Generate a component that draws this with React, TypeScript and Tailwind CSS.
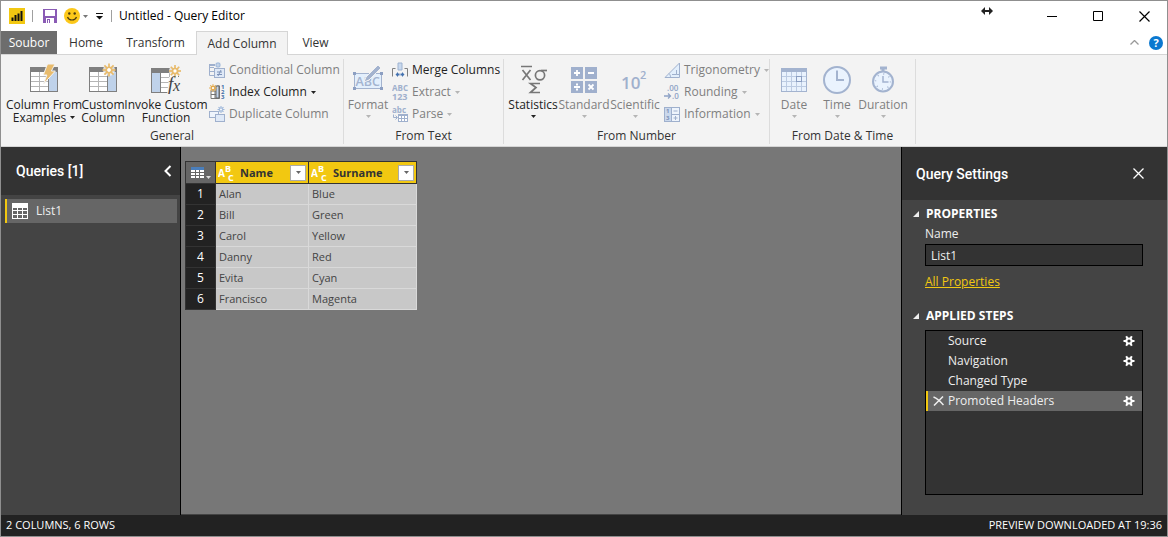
import { ReactNode } from 'react'
import clsx from 'clsx'

const rows = [
    { name: 'Alan', surname: 'Blue' },
    { name: 'Bill', surname: 'Green' },
    { name: 'Carol', surname: 'Yellow' },
    { name: 'Danny', surname: 'Red' },
    { name: 'Evita', surname: 'Cyan' },
    { name: 'Francisco', surname: 'Magenta' },
]

const steps = [
    { title: 'Source', settings: true, selected: false },
    { title: 'Navigation', settings: true, selected: false },
    { title: 'Changed Type', settings: false, selected: false },
    { title: 'Promoted Headers', settings: true, selected: true },
]

const tabs = [
    { title: 'Home', width: 'w-[58px]', active: false },
    { title: 'Transform', width: 'w-[81px]', active: false },
    { title: 'Add Column', width: 'w-[92px]', active: true },
    { title: 'View', width: 'w-[55px]', active: false },
]

/* ---------- icons ---------- */

function Caret({ className }: { className?: string }) {
    return (
        <svg width="5" height="3" viewBox="0 0 5 3" className={clsx('shrink-0', className)} fill="currentColor">
            <path d="M0 0h5L2.5 3z" />
        </svg>
    )
}

function Spark({ x, y, r, color = '#e8bb6c' }: { x: number; y: number; r: number; color?: string }) {
    const angles = [0, 45, 90, 135, 180, 225, 270, 315]
    return (
        <g transform={`translate(${x} ${y})`} stroke={color} fill="none" strokeWidth={r > 5 ? 1.7 : 1.1}>
            {angles.map((a) => (
                <line key={a} x1={r * 0.4} y1="0" x2={r} y2="0" transform={`rotate(${a})`} />
            ))}
            <circle r={r * 0.42} fill="#fff" />
        </g>
    )
}

function TableBase({ left = false }: { left?: boolean }) {
    const blueX = left ? 1 : 19
    return (
        <g shapeRendering="crispEdges">
            <rect x="0" y="0" width="28" height="25" fill="#7f7f7f" />
            <rect x="1" y="5" width="26" height="19" fill="#fff" />
            <path d="M1 9h26v1H1zM1 14h26v1H1zM1 19h26v1H1zM9 5h1v19H9zM18 5h1v19h-1z" fill="#b5b5b5" />
            <rect x={blueX} y="5" width="8" height="19" fill="#bfd2ea" />
            <rect x={left ? 9 : 18} y="5" width="1" height="19" fill="#7f7f7f" />
        </g>
    )
}

function FromExamplesIcon() {
    return (
        <svg width="32" height="32" viewBox="0 0 32 32">
            <g transform="translate(2 4)"><TableBase /></g>
            <path d="M19.5 1H27l-3.6 7h4L15.5 21l3.4-9h-3.6z" fill="#e8bb6c" stroke="#f3f3f3" />
        </svg>
    )
}

function CustomColumnIcon() {
    return (
        <svg width="32" height="32" viewBox="0 0 32 32">
            <g transform="translate(2 4)"><TableBase /></g>
            <circle cx="22" cy="7" r="6" fill="#f3f3f3" opacity="0.8" />
            <Spark x={22} y={7} r={6.5} />
        </svg>
    )
}

function InvokeIcon() {
    return (
        <svg width="32" height="32" viewBox="0 0 32 32">
            <g transform="translate(1 5)"><TableBase left /></g>
            <circle cx="25" cy="8" r="6" fill="#f3f3f3" opacity="0.9" />
            <path d="M19 14h13v18H17z" fill="#f3f3f3" />
            <Spark x={25} y={8} r={6} />
            <text x="18" y="27" fontFamily="Liberation Serif, serif" fontStyle="italic" fontSize="19" fill="#444">f</text>
            <text x="23" y="28" fontFamily="Liberation Serif, serif" fontStyle="italic" fontSize="16" fill="#444">x</text>
        </svg>
    )
}

function ConditionalIcon() {
    return (
        <svg width="16" height="16" viewBox="0 0 16 16">
            <path d="M.5 2v11.500H5M.5 5.500H5M.5 9.500H5" fill="none" stroke="#9fb0cd" />
            <path d="M0 2h6v2H0z" fill="#9fb0cd" />
            <rect x="5.500" y="6.500" width="10" height="9" fill="#dfe9f7" stroke="#9fb0cd" />
            <path d="M8 10h5M8 12.500h5M12 8l-3 6" stroke="#7d92b8" />
            <Spark x={9} y={3} r={3} color="#9fb8da" />
        </svg>
    )
}

function IndexIcon() {
    return (
        <svg width="16" height="16" viewBox="0 0 16 16">
            <path d="M2 7v7.500h8.500V2H8v5H2zM2 10.500h8M6 7v7" fill="#fff" stroke="#777" />
            <rect x="7" y="2" width="3" height="12" fill="#bfd2ea" stroke="#666" />
            <Spark x={4} y={4} r={3.8} color="#e3a94a" />
            <g fontFamily="Open Sans, sans-serif" fontSize="6" fontWeight="700" fill="#3f6fa8">
                <text x="12" y="5">1</text>
                <text x="12" y="10">2</text>
                <text x="12" y="15">3</text>
            </g>
        </svg>
    )
}

function DuplicateIcon() {
    return (
        <svg width="16" height="16" viewBox="0 0 16 16">
            <rect x=".5" y="5.500" width="9" height="6" fill="#eef4fc" stroke="#9fb0cd" />
            <rect x="6.500" y="8.500" width="9" height="7" fill="#dfe9f7" stroke="#9fb0cd" />
            <Spark x={12} y={3.500} r={3.500} color="#9fb8da" />
        </svg>
    )
}

function FormatIcon() {
    return (
        <svg width="32" height="32" viewBox="0 0 32 32">
            <rect x="2.500" y="10.500" width="27" height="15" fill="#e3effc" stroke="#a3b3cf" />
            <text x="3.500" y="23" fontFamily="Open Sans, sans-serif" fontSize="12.500" fontWeight="600" fill="#a3b3cf">ABC</text>
            <path d="M1 9h3v3H1zM28 9h3v3h-3zM1 24h3v3H1zM28 24h3v3h-3z" fill="#8c9fc2" />
            <path d="M26 2l3 3-12 12-5 2 2-5z" fill="#a3b3cf" stroke="#f3f3f3" />
        </svg>
    )
}

function MergeIcon() {
    return (
        <svg width="16" height="16" viewBox="0 0 16 16">
            <path d="M3.500 6.500h-3v8M12.500 6.500h3v8" fill="none" stroke="#808080" />
            <path d="M6 1h4v7H6z" fill="#c9d9ee" stroke="#9db2d0" />
            <path d="M3.500 12.500L6 10v1.500h1.500v2H6V15zM12.500 12.500L10 10v1.500H8.500v2H10V15z" fill="#4472b0" />
        </svg>
    )
}

function ExtractIcon() {
    return (
        <svg width="17" height="16" viewBox="0 0 17 16" fontFamily="Open Sans, sans-serif" fontSize="8" fontWeight="700" fill="#9fb0cd">
            <text x="0" y="7">ABC</text>
            <text x="0" y="16" fontSize="9">123</text>
        </svg>
    )
}

function ParseIcon() {
    return (
        <svg width="17" height="16" viewBox="0 0 17 16">
            <text x="0" y="7" fontFamily="Open Sans, sans-serif" fontSize="8" fontWeight="700" fill="#9fb0cd">abc</text>
            <path d="M1.500 8.500v3H5M3.500 9.500l2 2-2 2" fill="none" stroke="#9fb0cd" />
            <rect x="6.500" y="8.500" width="9" height="7" fill="#fff" stroke="#9fb0cd" />
            <path d="M6 9.500h10M6 12.500h10M9.500 9v7M12.500 9v7" stroke="#9fb0cd" />
        </svg>
    )
}

function StatisticsIcon() {
    return (
        <svg width="32" height="32" viewBox="0 0 32 32" fill="none" stroke="#777" strokeWidth="1.700">
            <path d="M4 3.500h11M5.500 7l8 10M13.500 7l-8 10" />
            <path d="M30 7.500h-6" />
            <circle cx="23" cy="12.300" r="4.600" />
            <path d="M23 29.500H13.500L19 24.500 13.500 20.500H23" />
        </svg>
    )
}

function StandardIcon() {
    return (
        <svg width="32" height="32" viewBox="0 0 32 32">
            <path d="M3 4h12v12H3zM17 4h12v12H17zM3 18h12v12H3zM17 18h12v12H17z" fill="#a0b0cd" />
            <path d="M6 10h6M9 7v6M20 10h6M6 24h6M20.500 21.500l5 5M25.500 21.500l-5 5" stroke="#fff" strokeWidth="1.800" />
            <path d="M8 20.500h2v2H8zM8 25.500h2v2H8z" fill="#fff" />
        </svg>
    )
}

function ScientificIcon() {
    return (
        <svg width="32" height="32" viewBox="0 0 32 32" fontFamily="Open Sans, sans-serif" fontWeight="600" fill="#a0b0cd">
            <text x="2" y="26" fontSize="17">10</text>
            <text x="21" y="16" fontSize="11">2</text>
        </svg>
    )
}

function TrigIcon() {
    return (
        <svg width="16" height="16" viewBox="0 0 16 16" stroke="#9fb0cd">
            <path d="M15.500 1v14.500H1z" fill="#e3effc" />
            <path d="M12.500 8v4.500H8M12.500 12.500h3M5 11.500c1 1 1.500 2 1.500 4" fill="none" />
        </svg>
    )
}

function RoundingIcon() {
    return (
        <svg width="16" height="16" viewBox="0 0 16 16">
            <g fontFamily="Open Sans, sans-serif" fontSize="8" fontWeight="600" fill="#8fa3c6">
                <text x="3" y="7">.00</text>
                <text x="8" y="15">.0</text>
            </g>
            <path d="M0 12h6M4 9.500L6.500 12 4 14.500" fill="none" stroke="#8fa3c6" strokeWidth="1.300" />
        </svg>
    )
}

function InformationIcon() {
    return (
        <svg width="16" height="16" viewBox="0 0 16 16">
            <rect x=".5" y="1.500" width="15" height="14" fill="#eef4fc" stroke="#9fb0cd" />
            <rect x="1" y="2" width="6" height="13" fill="#cad8ec" />
            <path d="M7.500 2v13M8 8.500h7M9.500 5h4M9.500 12h4M11.500 10v4" stroke="#9fb0cd" />
            <g fontFamily="Open Sans, sans-serif" fontSize="6" fontWeight="700" fill="#7d92b8">
                <text x="2" y="7">1</text>
                <text x="2" y="14">3</text>
            </g>
        </svg>
    )
}

function DateIcon() {
    return (
        <svg width="32" height="32" viewBox="0 0 32 32" shapeRendering="crispEdges">
            <rect x="3.500" y="5.500" width="25" height="23" fill="#e9f2fd" stroke="#a3b3cf" />
            <rect x="3" y="5" width="26" height="4" fill="#a3b3cf" />
            <path d="M4 13.500h24M4 18.500h24M4 23.500h24M8.500 9v19M13.500 9v19M18.500 9v19M23.500 9v19" stroke="#bccbe2" />
            <rect x="18.500" y="13.500" width="5" height="5" fill="none" stroke="#8c9fc2" />
        </svg>
    )
}

function TimeIcon() {
    return (
        <svg width="32" height="32" viewBox="0 0 32 32" stroke="#a3b3cf" strokeWidth="2">
            <circle cx="16" cy="17" r="13" fill="#eaf3fe" />
            <path d="M16 7.500V17h7" fill="none" />
        </svg>
    )
}

function DurationIcon() {
    return (
        <svg width="32" height="32" viewBox="0 0 32 32" stroke="#a3b3cf">
            <circle cx="16" cy="18.500" r="10" fill="#eaf3fe" strokeWidth="2" />
            <path d="M13 5h7M16 4v5" strokeWidth="3" />
            <path d="M16 13v6h5.500" fill="none" strokeWidth="1.500" />
            <circle cx="16" cy="18.500" r="7.500" fill="none" strokeDasharray="1 4.900" strokeWidth="1.500" />
        </svg>
    )
}

function TypeIcon() {
    return (
        <svg width="18" height="18" viewBox="0 0 18 18" fontFamily="Open Sans, sans-serif" fontWeight="700" fill="#fff">
            <text x="0" y="13" fontSize="10">A</text>
            <text x="7" y="8" fontSize="9">B</text>
            <text x="10" y="17" fontSize="9">C</text>
        </svg>
    )
}

function GearIcon() {
    return (
        <svg width="12" height="12" viewBox="0 0 12 12" stroke="#fff" fill="none">
            <circle cx="6" cy="6" r="2.600" strokeWidth="2" />
            <path d="M.5 6H3M9 6h2.500M3.200 1.300l1.300 2.200M7.500 8.500l1.300 2.200M8.800 1.300L7.500 3.500M4.500 8.500l-1.300 2.200" strokeWidth="2" />
        </svg>
    )
}

/* ---------- ribbon parts ---------- */

interface BigButtonProps {
    icon: ReactNode
    lines: string[]
    width: string
    caret?: boolean
    disabled?: boolean
}

function BigButton({ icon, lines, width, caret, disabled }: BigButtonProps) {
    return (
        <button type="button" disabled={disabled} className={clsx('flex flex-col items-center leading-[13px] whitespace-nowrap', width, disabled ? 'text-[#7f7f7f]' : 'text-[#222]')}>
            <span className="flex h-[39px] items-center">{icon}</span>
            {lines.map((line, i) => (
                <span key={line} className="flex items-center gap-1">
                    {line}
                    {caret && i === 1 && <Caret />}
                </span>
            ))}
            {caret && lines.length === 1 && (
                <Caret className={clsx('mt-1', disabled && 'text-[#b5b5b5]')} />
            )}
        </button>
    )
}

interface SmallButtonProps {
    icon: ReactNode
    label: string
    caret?: boolean
    disabled?: boolean
}

function SmallButton({ icon, label, caret, disabled }: SmallButtonProps) {
    return (
        <button type="button" disabled={disabled} className={clsx('flex h-[22px] items-center whitespace-nowrap', disabled ? 'text-[#7f7f7f]' : 'text-[#222]')}>
            <span className="w-5 shrink-0">{icon}</span>
            {label}
            {caret && <Caret className={clsx('ml-1', disabled && 'text-[#b5b5b5]')} />}
        </button>
    )
}

function Group({ title, width, children }: { title: string; width: string; children: ReactNode }) {
    return (
        <section className={clsx('flex shrink-0 flex-col pt-1 pb-0.5', width)}>
            <div className="flex h-[68px] border-r border-[#dcdcdc] pl-1">{children}</div>
            <div className="flex h-[17px] items-center justify-center border-r border-[#dcdcdc] text-[#333]">{title}</div>
        </section>
    )
}

function Ribbon() {
    return (
        <div className="flex h-[92px] overflow-hidden border-b border-[#d5d5d5] bg-[#f3f3f3]">
            <Group title="General" width="w-[343px]">
                <div className="flex pl-1">
                    <BigButton icon={<FromExamplesIcon />} lines={['Column From', 'Examples']} width="w-[70px]" caret />
                    <BigButton icon={<CustomColumnIcon />} lines={['Custom', 'Column']} width="w-12" />
                    <BigButton icon={<InvokeIcon />} lines={['Invoke Custom', 'Function']} width="w-[78px]" />
                </div>
                <div className="ml-1">
                    <SmallButton icon={<ConditionalIcon />} label="Conditional Column" disabled />
                    <SmallButton icon={<IndexIcon />} label="Index Column" caret />
                    <SmallButton icon={<DuplicateIcon />} label="Duplicate Column" disabled />
                </div>
            </Group>
            <Group title="From Text" width="w-40">
                <BigButton icon={<FormatIcon />} lines={['Format']} width="w-10" caret disabled />
                <div className="ml-1">
                    <SmallButton icon={<MergeIcon />} label="Merge Columns" />
                    <SmallButton icon={<ExtractIcon />} label="Extract" caret disabled />
                    <SmallButton icon={<ParseIcon />} label="Parse" caret disabled />
                </div>
            </Group>
            <Group title="From Number" width="w-[266px]">
                <BigButton icon={<StatisticsIcon />} lines={['Statistics']} width="w-[50px]" caret />
                <BigButton icon={<StandardIcon />} lines={['Standard']} width="w-[52px]" caret disabled />
                <BigButton icon={<ScientificIcon />} lines={['Scientific']} width="w-[50px]" caret disabled />
                <div className="ml-1">
                    <SmallButton icon={<TrigIcon />} label="Trigonometry" caret disabled />
                    <SmallButton icon={<RoundingIcon />} label="Rounding" caret disabled />
                    <SmallButton icon={<InformationIcon />} label="Information" caret disabled />
                </div>
            </Group>
            <Group title="From Date & Time" width="w-[146px]">
                <BigButton icon={<DateIcon />} lines={['Date']} width="w-10" caret disabled />
                <BigButton icon={<TimeIcon />} lines={['Time']} width="w-[46px]" caret disabled />
                <BigButton icon={<DurationIcon />} lines={['Duration']} width="w-[46px]" caret disabled />
            </Group>
        </div>
    )
}

/* ---------- window chrome ---------- */

function TitleBar() {
    return (
        <header className="relative flex h-[30px] items-center bg-white text-black">
            <svg width="16" height="16" viewBox="0 0 16 16" className="ml-2">
                <rect width="16" height="16" fill="#f2c811" />
                <path d="M2.500 9.500h2V13h-2zM5.500 7h2v6h-2zM8.500 5.500h2V13h-2zM11.500 3h2v10h-2z" fill="#111" />
            </svg>
            <span className="ml-[7px] h-3 w-px bg-[#a0a0a0]" />
            <button type="button" aria-label="Save" className="ml-[10px]">
                <svg width="14" height="14" viewBox="0 0 14 14">
                    <path d="M0 0h14v14H0z" fill="#8a5bb5" />
                    <path d="M2 1h10v6H2zM3 9h8v5H3z" fill="#fff" />
                    <path d="M4 10h3v4H4z" fill="#8a5bb5" />
                    <path d="M5 11h1v3H5z" fill="#fff" />
                </svg>
            </button>
            <button type="button" aria-label="Feedback" className="ml-[7px] flex items-center gap-[3px] text-[#777]">
                <svg width="16" height="16" viewBox="0 0 16 16">
                    <circle cx="8" cy="8" r="8" fill="#fcc81a" />
                    <circle cx="5.300" cy="5.500" r="1.200" fill="#4a3b10" />
                    <circle cx="10.700" cy="5.500" r="1.200" fill="#4a3b10" />
                    <path d="M3.500 9c1.500 4 7.500 4 9 0" fill="none" stroke="#4a3b10" strokeWidth="1.200" />
                </svg>
                <Caret />
            </button>
            <button type="button" aria-label="Customize toolbar" className="ml-2">
                <svg width="7" height="8" viewBox="0 0 7 8">
                    <path d="M0 1h7v1H0zM0 4h7L3.500 7.500z" fill="#111" />
                </svg>
            </button>
            <span className="ml-2 h-3 w-px bg-[#a0a0a0]" />
            <h1 className="ml-[7px]">Untitled - Query Editor</h1>
            <svg width="12" height="8" viewBox="0 0 12 8" className="absolute top-1.5 right-[174px]">
                <path d="M0 4l4-4v3h4V0l4 4-4 4V5H4v3z" fill="#222" />
            </svg>
            <div className="ml-auto flex">
                <button type="button" aria-label="Minimize" className="flex h-7 w-[46px] items-center justify-center">
                    <svg width="11" height="11" viewBox="0 0 11 11" stroke="#000"><path d="M0 5.500h10" /></svg>
                </button>
                <button type="button" aria-label="Maximize" className="flex h-7 w-[46px] items-center justify-center">
                    <svg width="11" height="11" viewBox="0 0 11 11" stroke="#000" fill="none"><path d="M.5.5h9v9h-9z" /></svg>
                </button>
                <button type="button" aria-label="Close" className="flex h-7 w-[46px] items-center justify-center">
                    <svg width="11" height="11" viewBox="0 0 11 11" stroke="#000" strokeWidth="1.200"><path d="M.5.5l10 10M10.500.5l-10 10" /></svg>
                </button>
            </div>
        </header>
    )
}

function TabBar() {
    return (
        <nav className="flex h-6 items-stretch bg-white text-[#333]">
            <button type="button" className="w-14 border-b border-[#d5d5d5] bg-[#6d6d6d] text-white">Soubor</button>
            {tabs.map((tab) => (
                <button
                    key={tab.title}
                    type="button"
                    className={clsx(tab.width, 'whitespace-nowrap border-[#d5d5d5]', tab.active ? 'border-x border-t bg-[#f3f3f3]' : 'border-b')}
                >
                    {tab.title}
                </button>
            ))}
            <div className="flex flex-1 items-center justify-end gap-[10px] border-b border-[#d5d5d5] pr-1">
                <button type="button" aria-label="Collapse ribbon">
                    <svg width="9" height="5" viewBox="0 0 9 5" fill="none" stroke="#999" strokeWidth="1.300"><path d="M.5 4.500l4-4 4 4" /></svg>
                </button>
                <button type="button" aria-label="Help">
                    <svg width="14" height="14" viewBox="0 0 14 14">
                        <circle cx="7" cy="7" r="7" fill="#0a78d0" />
                        <text x="7" y="11" textAnchor="middle" fontFamily="Open Sans, sans-serif" fontSize="11" fontWeight="700" fill="#fff">?</text>
                    </svg>
                </button>
            </div>
        </nav>
    )
}

/* ---------- panels ---------- */

function QueriesPanel() {
    return (
        <aside className="w-[180px] shrink-0 border-r border-black bg-[#444]">
            <div className="flex h-12 items-center justify-between bg-[#333] pr-2 pl-[15px]">
                <h2 className="font-['Roboto',sans-serif] text-sm font-medium text-white">Queries [1]</h2>
                <button type="button" aria-label="Collapse queries">
                    <svg width="8" height="12" viewBox="0 0 8 12" fill="none" stroke="#fff" strokeWidth="2"><path d="M6.500 1L1.500 6l5 5" /></svg>
                </button>
            </div>
            <button type="button" className="mt-1 mr-[2px] ml-1 flex h-6 w-[172px] items-center border-l-2 border-[#f2c811] bg-[#666] pl-[5px] text-xs text-[#eee]">
                <svg width="16" height="16" viewBox="0 0 16 16" shapeRendering="crispEdges">
                    <path d="M0 0h16v16H0z" fill="#fff" />
                    <path d="M1 5h4v2H1zM6 5h4v2H6zM11 5h4v2h-4zM1 8h4v3H1zM6 8h4v3H6zM11 8h4v3h-4zM1 12h4v3H1zM6 12h4v3H6zM11 12h4v3h-4z" fill="#666" />
                </svg>
                <span className="ml-2">List1</span>
            </button>
        </aside>
    )
}

function HeaderCell({ title }: { title: string }) {
    return (
        <div className="flex items-center pr-[2px] pl-[2px]">
            <TypeIcon />
            <span className="ml-1">{title}</span>
            <button type="button" aria-label={`Filter ${title}`} className="ml-auto flex size-4 items-center justify-center border border-[#aaa] bg-white text-[#666]">
                <Caret />
            </button>
        </div>
    )
}

function Preview() {
    return (
        <main className="min-w-0 flex-1 border-b border-[#444] bg-[#777] pt-[14px] pl-1">
            <table className="w-[231px] table-fixed border-collapse text-[11px] leading-4 text-[#444]">
                <colgroup>
                    <col className="w-[30px]" />
                    <col className="w-[93px]" />
                    <col className="w-[108px]" />
                </colgroup>
                <thead>
                    <tr className="h-[22px] text-left font-bold text-[#333]">
                        <th className="border border-[#333] bg-[#666] p-0">
                            <button type="button" aria-label="Table options" className="flex items-end gap-[2px] pl-[5px] text-[#ddd]">
                                <svg width="13" height="12" viewBox="0 0 13 12" shapeRendering="crispEdges">
                                    <path d="M0 0h13v3H0z" fill="#4a7ebb" />
                                    <path d="M0 3h4v2H0zM5 3h3v2H5zM9 3h4v2H9zM0 6h4v2H0zM5 6h3v2H5zM9 6h4v2H9zM0 9h4v2H0zM5 9h3v2H5zM9 9h4v2H9z" fill="#fff" />
                                </svg>
                                <Caret />
                            </button>
                        </th>
                        <th className="border border-[#333] bg-[#f2c811] p-0"><HeaderCell title="Name" /></th>
                        <th className="border border-[#333] bg-[#f2c811] p-0"><HeaderCell title="Surname" /></th>
                    </tr>
                </thead>
                <tbody>
                    {rows.map((row, i) => (
                        <tr key={row.name} className="h-[21px]">
                            <th className="border border-[#333] bg-[#222] p-0 text-center text-xs leading-4 font-normal text-white">{i + 1}</th>
                            <td className="border border-[#d9d9d9] bg-[#c8c8c8] py-0 pr-0 pl-[3px]">{row.name}</td>
                            <td className="border border-[#d9d9d9] bg-[#c8c8c8] py-0 pr-0 pl-[3px]">{row.surname}</td>
                        </tr>
                    ))}
                </tbody>
            </table>
        </main>
    )
}

function SectionTitle({ children }: { children: ReactNode }) {
    return (
        <h3 className="-ml-3 flex h-5 items-center gap-[7px] font-bold text-white">
            <svg width="6" height="6" viewBox="0 0 6 6"><path d="M6 0v6H0z" fill="#eee" /></svg>
            {children}
        </h3>
    )
}

function SettingsPanel() {
    return (
        <aside className="flex w-[266px] shrink-0 flex-col border-l border-black bg-[#444] text-xs text-[#eee]">
            <div className="flex h-[53px] items-center justify-between bg-[#333] pr-[23px] pl-[14px]">
                <h2 className="font-['Roboto',sans-serif] text-sm font-medium text-white">Query Settings</h2>
                <button type="button" aria-label="Close settings">
                    <svg width="11" height="11" viewBox="0 0 11 11" stroke="#fff" strokeWidth="1.300"><path d="M.5.5l10 10M10.500.5l-10 10" /></svg>
                </button>
            </div>
            <div className="flex flex-1 flex-col pt-1 pr-6 pb-5 pl-[23px]">
                <SectionTitle>PROPERTIES</SectionTitle>
                <label htmlFor="query-name" className="flex h-5 items-center">Name</label>
                <input id="query-name" type="text" defaultValue="List1" className="h-[22px] w-full border border-black bg-[#333] px-[5px] text-xs text-[#eee]" />
                <a href="#" className="mt-2 self-start text-[#f2c811] underline">All Properties</a>
                <div className="mt-4">
                    <SectionTitle>APPLIED STEPS</SectionTitle>
                </div>
                <ul className="mt-1 flex-1 border border-black bg-[#333]">
                    {steps.map((step) => (
                        <li key={step.title} className={clsx('flex h-5 items-center border-l-2 pr-[7px]', step.selected ? 'border-[#f2c811] bg-[#666]' : 'border-transparent')}>
                            <span className="w-5 pl-[5px]">
                                {step.selected && (
                                    <button type="button" aria-label="Delete step" className="block">
                                        <svg width="11" height="10" viewBox="0 0 11 10" stroke="#eee" strokeWidth="1.500"><path d="M.5 1c4 1.500 7 4.500 10 8M10 .5l-9 9" fill="none" /></svg>
                                    </button>
                                )}
                            </span>
                            <span className="flex-1">{step.title}</span>
                            {step.settings && <button type="button" aria-label={`Edit ${step.title}`}><GearIcon /></button>}
                        </li>
                    ))}
                </ul>
            </div>
        </aside>
    )
}

export default function App() {
    return (
        <div className="flex min-h-screen flex-col border border-[#8f8f8f] font-['Open_Sans',sans-serif] text-xs">
            <TitleBar />
            <TabBar />
            <Ribbon />
            <div className="flex flex-1">
                <QueriesPanel />
                <Preview />
                <SettingsPanel />
            </div>
            <footer className="flex h-[21px] items-center justify-between bg-[#222] px-[5px] text-[11px] text-white">
                <span>2 COLUMNS, 6 ROWS</span>
                <span>PREVIEW DOWNLOADED AT 19:36</span>
            </footer>
        </div>
    )
}
